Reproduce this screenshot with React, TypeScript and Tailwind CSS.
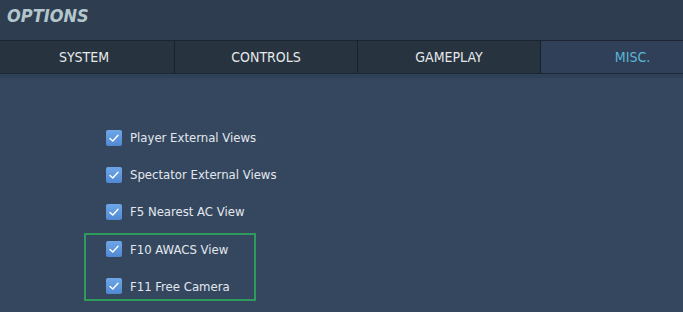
import React from 'react';

const TABS = ['SYSTEM', 'CONTROLS', 'GAMEPLAY', 'MISC.'];

const OPTIONS_TOP = ['Player External Views', 'Spectator External Views', 'F5 Nearest AC View'];
const OPTIONS_BOXED = ['F10 AWACS View', 'F11 Free Camera'];

const CheckBox: React.FC = () => (
  <div className="w-[16px] h-[16px] shrink-0 rounded-[2px] bg-gradient-to-b from-[#6ea7e8] to-[#5089d2] flex items-center justify-center">
    <svg width="12" height="12" viewBox="0 0 12 12" fill="none">
      <path d="M2 6.4 L4.8 9 L10 3.2" stroke="#ffffff" strokeWidth="1.4" strokeLinecap="round" strokeLinejoin="round" />
    </svg>
  </div>
);

const CheckRow: React.FC<{ label: string; tall?: boolean }> = ({ label, tall }) => (
  <div className={`flex items-center gap-[8px] ${tall ? 'h-[37px]' : 'h-[16px]'}`}>
    <CheckBox />
    <span className="text-[13px] leading-none text-[#e3e8ee]">{label}</span>
  </div>
);

export default function App() {
  return (
    <div
      className="w-[683px] h-[312px] overflow-hidden bg-[#34475f] flex flex-col"
      style={{ fontFamily: '"DejaVu Sans Condensed", "DejaVu Sans", sans-serif' }}
    >
      <div className="h-[40px] bg-[#2e3d50] flex items-start pt-[6px] px-[7px] shrink-0">
        <h1 className="text-[18px] font-bold italic text-[#b3c6cc] leading-[20px]">OPTIONS</h1>
      </div>
      <div className="h-[34px] flex border-t border-t-[#1b2430] border-b border-b-[#1e2834] shrink-0">
        {TABS.map((t, i) => (
          <div
            key={t}
            className={`${i === 0 ? 'w-[175px] pr-[6px]' : 'w-[183px]'} shrink-0 flex items-center justify-center text-[14px] ${i < 3 ? 'border-r border-r-[#19212b] bg-[#27333f] text-[#e6e8ea]' : 'bg-[#2f4058] text-[#5cb6d6]'}`}
          >
            {t}
          </div>
        ))}
      </div>
      <div className="h-[4px] bg-[#2f4157] shrink-0" />
      <div className="pl-[106px] pt-[41px]">
        {OPTIONS_TOP.map(o => <CheckRow key={o} label={o} tall />)}
        <div className="-ml-[22px] mt-[3px] w-[172px] border-2 border-[#2e9a5c] pl-[20px] pt-[6px] pb-[5px] flex flex-col gap-[21px]">
          {OPTIONS_BOXED.map(o => <CheckRow key={o} label={o} />)}
        </div>
      </div>
    </div>
  );
}
